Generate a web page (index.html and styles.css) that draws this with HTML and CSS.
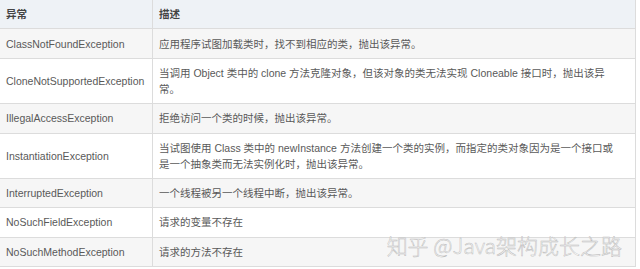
FILE: index.html
```html
<!DOCTYPE html>
<html lang="zh-CN">
<head>
<meta charset="utf-8">
<link rel="stylesheet" href="styles.css">
</head>
<body>
<div class="page">
  <table class="ex-table">
    <thead>
      <tr><th class="c1">异常</th><th>描述</th></tr>
    </thead>
    <tbody>
      <tr class="alt"><td class="c1">ClassNotFoundException</td><td>应用程序试图加载类时，找不到相应的类，抛出该异常。</td></tr>
      <tr><td class="c1">CloneNotSupportedException</td><td>当调用 Object 类中的 clone 方法克隆对象，但该对象的类无法实现 Cloneable 接口时，抛出该异常。</td></tr>
      <tr class="alt"><td class="c1">IllegalAccessException</td><td>拒绝访问一个类的时候，抛出该异常。</td></tr>
      <tr><td class="c1">InstantiationException</td><td>当试图使用 Class 类中的 newInstance 方法创建一个类的实例，而指定的类对象因为是一个接口或是一个抽象类而无法实例化时，抛出该异常。</td></tr>
      <tr class="alt"><td class="c1">InterruptedException</td><td>一个线程被另一个线程中断，抛出该异常。</td></tr>
      <tr><td class="c1">NoSuchFieldException</td><td>请求的变量不存在</td></tr>
      <tr class="alt"><td class="c1">NoSuchMethodException</td><td>请求的方法不存在</td></tr>
    </tbody>
  </table>
  <div class="watermark">知乎 @Java架构成长之路</div>
</div>
</body>
</html>
```
FILE: styles.css
```css
html, body {
  margin: 0;
  padding: 0;
  background: #fff;
}
.page {
  position: relative;
  width: 640px;
  height: 269px;
  overflow: hidden;
}
.ex-table {
  border-collapse: collapse;
  width: 636px;
  table-layout: fixed;
  font-family: "Liberation Sans", "Noto Sans CJK SC", sans-serif;
  font-size: 10.5px;
  line-height: 16px;
  color: #595959;
}
.ex-table th,
.ex-table td {
  text-align: left;
  vertical-align: middle;
  padding: 6.2px 20px 6.2px 6px;
  border-top: 1px solid #dcdcdc;
  border-bottom: 1px solid #dcdcdc;
  border-right: 1px solid #dcdcdc;
}
.ex-table th {
  border-top: none;
  background: #eef2f6;
  color: #444;
  font-weight: bold;
}
.ex-table .c1 {
  width: 140px;
  padding-right: 6px;
}
.ex-table tr.alt td {
  background: #f6f6f6;
}
.watermark {
  position: absolute;
  right: 18px;
  bottom: 12px;
  font-family: "Noto Sans CJK SC", sans-serif;
  font-size: 21px;
  line-height: 24px;
  font-weight: 300;
  color: rgba(255, 255, 255, 0.9);
  -webkit-text-stroke: 0.5px rgba(160, 160, 160, 0.7);
  white-space: nowrap;
}
```
